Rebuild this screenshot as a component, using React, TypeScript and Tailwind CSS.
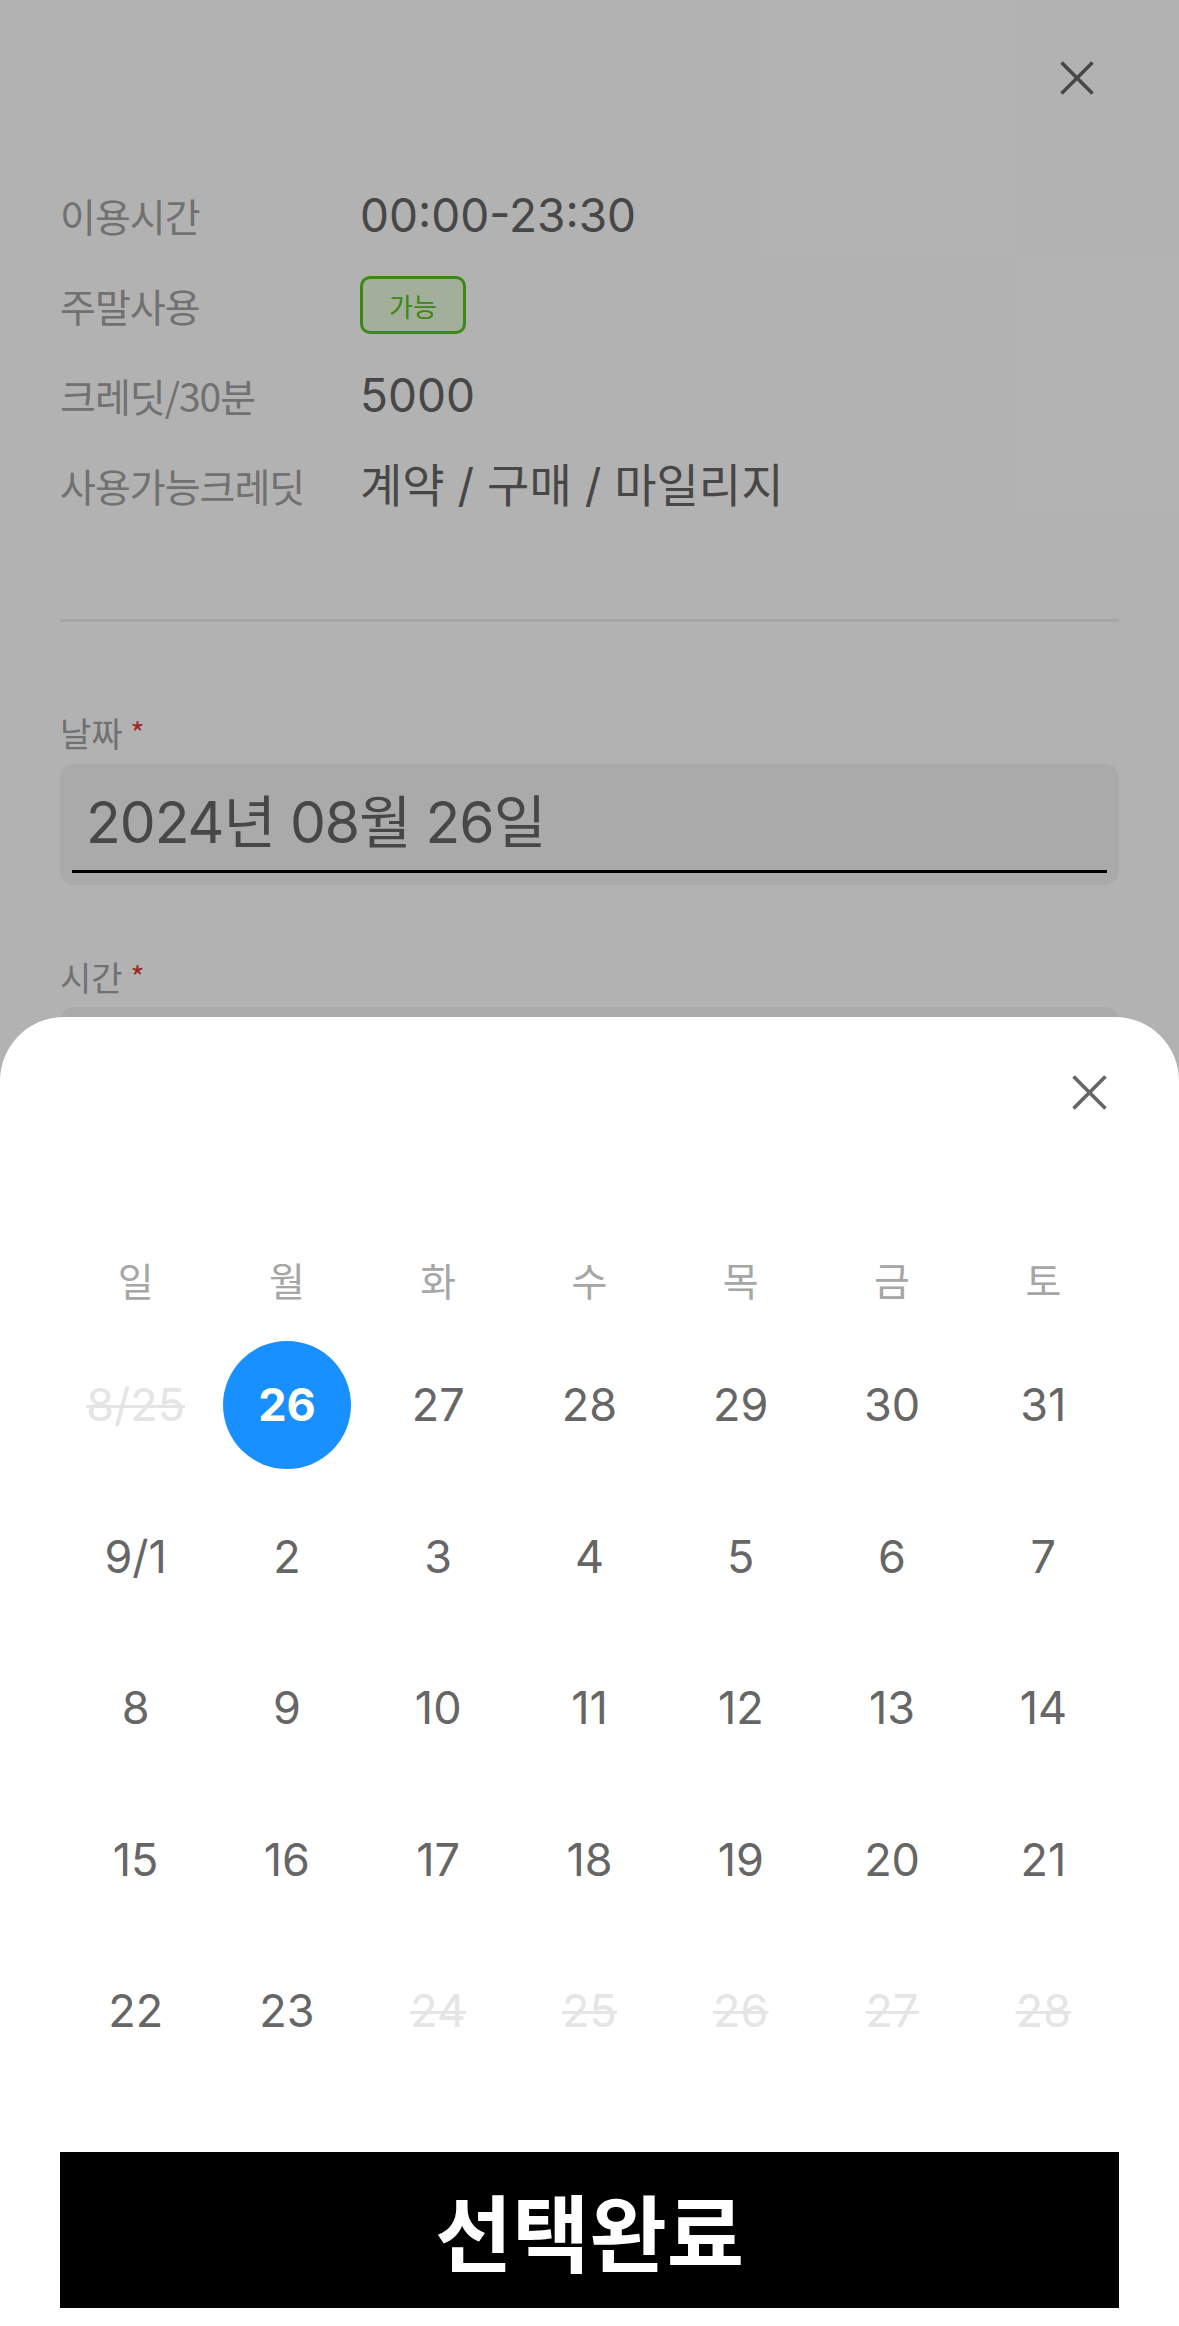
import React from 'react';

type Day = { label: string; disabled?: boolean; selected?: boolean };

const weekdays = ['일', '월', '화', '수', '목', '금', '토'];

const weeks: Day[][] = [
  [
    { label: '8/25', disabled: true },
    { label: '26', selected: true },
    { label: '27' },
    { label: '28' },
    { label: '29' },
    { label: '30' },
    { label: '31' },
  ],
  ['9/1', '2', '3', '4', '5', '6', '7'].map((label) => ({ label })),
  ['8', '9', '10', '11', '12', '13', '14'].map((label) => ({ label })),
  ['15', '16', '17', '18', '19', '20', '21'].map((label) => ({ label })),
  [
    { label: '22' },
    { label: '23' },
    { label: '24', disabled: true },
    { label: '25', disabled: true },
    { label: '26', disabled: true },
    { label: '27', disabled: true },
    { label: '28', disabled: true },
  ],
];

const infoRows = [
  { label: '이용시간', value: '00:00-23:30' },
  { label: '주말사용', badge: '가능' },
  { label: '크레딧/30분', value: '5000' },
  { label: '사용가능크레딧', value: '계약 / 구매 / 마일리지' },
];

function CloseIcon({ className }: { className?: string }) {
  return (
    <svg viewBox="0 0 34 34" className={className} fill="none" stroke="currentColor" strokeWidth={3.6}>
      <line x1="1.5" y1="1.5" x2="32.5" y2="32.5" />
      <line x1="32.5" y1="1.5" x2="1.5" y2="32.5" />
    </svg>
  );
}

export default function App() {
  return (
    <div className="relative w-full h-[2326px] overflow-hidden bg-white font-['Inter','Noto_Sans_CJK_KR',sans-serif]">
      {/* page behind the sheet */}
      <div className="px-[60px]">
        <div className="flex justify-end pt-[61px] pr-[25px]">
          <CloseIcon className="w-[34px] h-[34px] text-[#666]" />
        </div>

        <div className="mt-[75px] flex flex-col">
          {infoRows.map((row) => (
            <div key={row.label} className="h-[90px] flex items-center">
              <div className="w-[300px] text-[39px] text-[#a3a3a3] font-['Noto_Sans_CJK_KR',sans-serif] tracking-[-1px]">
                {row.label}
              </div>
              {row.badge ? (
                <div className="w-[106px] h-[58px] flex items-center justify-center rounded-[10px] border-[3px] border-[#52c41a] bg-[#eaf9df] text-[26px] text-[#52c41a] font-['Noto_Sans_CJK_KR',sans-serif]">
                  {row.badge}
                </div>
              ) : (
                <div className="text-[46px] text-[#666]">{row.value}</div>
              )}
            </div>
          ))}
        </div>

        <div className="mt-[89px] h-[3px] bg-[#eeeeee]" />

        <div className="mt-[88px] h-[44px] flex items-center gap-[8px] text-[34px] text-[#a3a3a3] font-['Noto_Sans_CJK_KR',sans-serif]">
          날짜 <span className="text-[#e03a3a] text-[30px]">*</span>
        </div>
        <div className="mt-[10px] rounded-[14px] bg-[#f4f4f4] p-[12px]">
          <div className="h-[97px] flex items-center pl-[14px] border-b-[3px] border-black text-[57px] text-[#666] tracking-[-1px]">
            2024년 08월 26일
          </div>
        </div>

        <div className="mt-[69px] h-[44px] flex items-center gap-[8px] text-[34px] text-[#a3a3a3] font-['Noto_Sans_CJK_KR',sans-serif]">
          시간 <span className="text-[#e03a3a] text-[30px]">*</span>
        </div>
        <div className="mt-[9px] h-[121px] rounded-[14px] bg-[#f4f4f4]" />
      </div>

      {/* dim overlay */}
      <div className="absolute inset-0 bg-black/30" />

      {/* bottom sheet */}
      <div className="absolute left-0 right-0 bottom-0 top-[1017px] bg-white rounded-t-[64px]">
        <div className="flex justify-end pt-[58px] pr-[72px]">
          <CloseIcon className="w-[35px] h-[35px] text-[#666]" />
        </div>

        <div className="mt-[139px] px-[60px]">
          <div className="grid grid-cols-7 h-[60px] items-center text-center text-[39px] text-[#a6a6a6] font-['Noto_Sans_CJK_KR',sans-serif]">
            {weekdays.map((w) => (
              <div key={w}>{w}</div>
            ))}
          </div>

          <div className="mt-[20px] flex flex-col">
            {weeks.map((week, i) => (
              <div key={i} className="grid grid-cols-7 h-[151.5px]">
                {week.map((d, j) => (
                  <div key={j} className="flex items-center justify-center">
                    {d.selected ? (
                      <div className="w-[128px] h-[128px] rounded-full bg-[#1890ff] flex items-center justify-center text-[45px] font-bold text-white">
                        {d.label}
                      </div>
                    ) : d.disabled ? (
                      <span className="text-[45px] text-[#e5e5e5] line-through decoration-[#e5e5e5] decoration-[3px]">
                        {d.label}
                      </span>
                    ) : (
                      <span className="text-[45px] text-[#666]">{d.label}</span>
                    )}
                  </div>
                ))}
              </div>
            ))}
          </div>
        </div>

        <div className="mx-[60px] mt-[65px] h-[156px] bg-black flex items-center justify-center text-[84px] font-bold text-white font-['Noto_Sans_CJK_KR',sans-serif]">
          선택완료
        </div>
      </div>
    </div>
  );
}
